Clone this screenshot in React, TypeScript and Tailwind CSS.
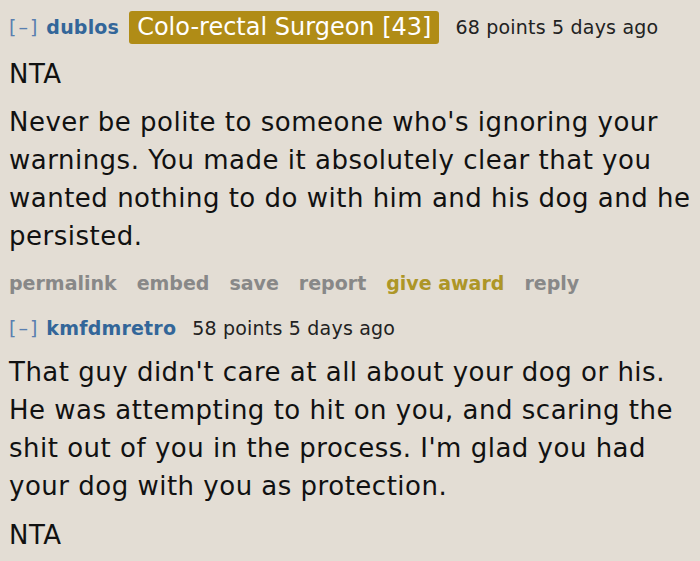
import React from 'react';

const font = { fontFamily: '"DejaVu Sans", Verdana, sans-serif' };

function Header({ user, points, flair }: { user: string; points: string; flair?: string }) {
  return (
    <div className="flex items-center whitespace-nowrap text-[19px] tracking-[0.2px] h-[33px]">
      <span className="text-[#5a7fb0] mr-[7px] tracking-[2px]">[–]</span>
      <span className="font-bold text-[#336699]">{user}</span>
      {flair && (
        <span className="ml-[10px] bg-[#b08c16] text-white text-[24px] leading-[33px] px-[8px] rounded-[3px] tracking-normal">
          {flair}
        </span>
      )}
      <span className="text-[#222] ml-[16px]">{points}</span>
    </div>
  );
}

function Actions() {
  const items = ['permalink', 'embed', 'save', 'report'];
  return (
    <div className="flex gap-[20px] text-[19px] font-bold text-[#888888] whitespace-nowrap">
      {items.map(i => (
        <span key={i}>{i}</span>
      ))}
      <span className="text-[#ad9627]">give award</span>
      <span>reply</span>
    </div>
  );
}

function Lines({ lines, className }: { lines: string[]; className?: string }) {
  return (
    <p className={'text-[26px] leading-[38px] tracking-[0.5px] whitespace-nowrap ' + (className ?? '')}>
      {lines.map((l, i) => (
        <React.Fragment key={i}>
          {l}
          {i < lines.length - 1 && <br />}
        </React.Fragment>
      ))}
    </p>
  );
}

export default function App() {
  return (
    <div className="w-[700px] h-[561px] bg-[#e3ddd4] overflow-hidden text-[#111] pl-[9px] pt-[11px]" style={font}>
      <Header user="dublos" flair="Colo-rectal Surgeon [43]" points="68 points 5 days ago" />
      <Lines className="mt-[11px]" lines={['NTA']} />
      <Lines
        className="mt-[10px]"
        lines={[
          "Never be polite to someone who's ignoring your",
          'warnings. You made it absolutely clear that you',
          'wanted nothing to do with him and his dog and he',
          'persisted.',
        ]}
      />
      <div className="mt-[14px]">
        <Actions />
      </div>
      <div className="mt-[14px]">
        <Header user="kmfdmretro" points="58 points 5 days ago" />
      </div>
      <Lines
        className="mt-[8px]"
        lines={[
          "That guy didn't care at all about your dog or his.",
          'He was attempting to hit on you, and scaring the',
          "shit out of you in the process. I'm glad you had",
          'your dog with you as protection.',
        ]}
      />
      <Lines className="mt-[11px]" lines={['NTA']} />
    </div>
  );
}
